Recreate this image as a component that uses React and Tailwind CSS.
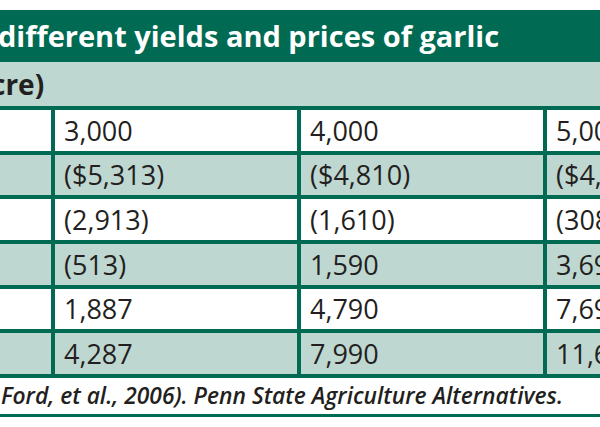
import React from "react";

const rows = [
  ["3,000", "4,000", "5,000"],
  ["($5,313)", "($4,810)", "($4,308)"],
  ["(2,913)", "(1,610)", "(308)"],
  ["(513)", "1,590", "3,692"],
  ["1,887", "4,790", "7,692"],
  ["4,287", "7,990", "11,692"],
];

export default function App() {
  return (
    <div
      className="w-[600px] h-[427px] overflow-hidden bg-white pt-[10px] text-[#231f20]"
      style={{ fontFamily: '"Open Sans", "Noto Sans", sans-serif' }}
    >
      <div className="h-[52px] bg-[#006a53] flex items-center pb-[2px]">
        <span className="ml-[-2px] text-white font-bold text-[29px] leading-none whitespace-nowrap">
          different yields and prices of garlic
        </span>
      </div>
      <div className="h-[44px] bg-[#bfd7d1] flex items-center">
        <span className="ml-[-9px] font-bold text-[28px] leading-none whitespace-nowrap">
          cre)
        </span>
      </div>
      <div className="w-[789px] bg-[#006a53] py-[4px] grid grid-cols-[51px_242px_242px_242px] gap-[4px]">
        {rows.map((r, i) => {
          const bg = i % 2 === 0 ? "bg-white" : "bg-[#bfd7d1]";
          return (
            <React.Fragment key={i}>
              <div className={`${bg} h-[40.67px]`} />
              {r.map((v, j) => (
                <div
                  key={j}
                  className={`${bg} h-[40.67px] flex items-center pl-[9px] text-[27px] leading-none whitespace-nowrap`}
                >
                  {v}
                </div>
              ))}
            </React.Fragment>
          );
        })}
      </div>
      <div className="h-[39px] flex items-center border-b-[3px] border-[#006a53]">
        <span className="ml-[1px] italic font-semibold text-[22.8px] leading-none whitespace-nowrap">
          Ford, et al., 2006). Penn State Agriculture Alternatives.
        </span>
      </div>
    </div>
  );
}
